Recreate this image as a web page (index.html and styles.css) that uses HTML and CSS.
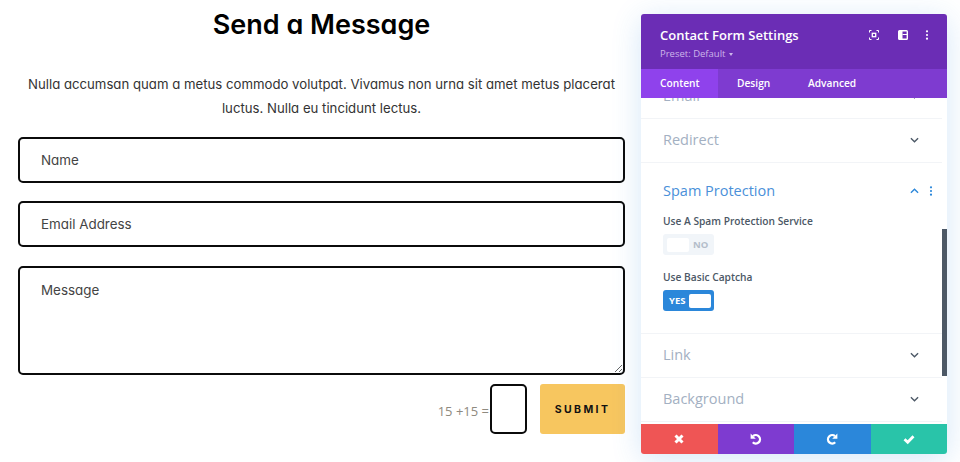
FILE: index.html
```html
<!DOCTYPE html>
<html lang="en">
<head>
<meta charset="utf-8">
<title>Contact Form Settings</title>
<link rel="stylesheet" href="styles.css">
</head>
<body>
<main class="page">
  <h1 class="title">Send a Message</h1>
  <p class="intro">Nulla accumsan quam a metus commodo volutpat. Vivamus non urna sit amet metus placerat luctus. Nulla eu tincidunt lectus.</p>
  <form class="form">
    <input class="field" type="text" placeholder="Name">
    <input class="field" type="text" placeholder="Email Address">
    <textarea class="field area" placeholder="Message"></textarea>
    <div class="submit-row">
      <span class="captcha-label">15 +15 =</span>
      <input class="captcha" type="text">
      <button class="submit" type="button">SUBMIT</button>
    </div>
  </form>
</main>

<aside class="panel">
  <header class="panel-head">
    <div class="head-text">
      <div class="panel-title">Contact Form Settings</div>
      <div class="preset">Preset: Default <span class="caret"></span></div>
    </div>
    <div class="head-icons">
      <svg class="hicon focus" viewBox="0 0 10 10"><path d="M.5 2.500V.5h2M7.500.5h2v2M9.500 7.500v2h-2M2.500 9.500h-2v-2" fill="none" stroke="#fff" stroke-width="1"/><rect x="3.300" y="3.300" width="3.400" height="3.400" fill="none" stroke="#fff" stroke-width="1.300"/></svg>
      <svg class="hicon split" viewBox="0 0 10 10"><rect x=".7" y=".7" width="8.600" height="8.600" rx=".8" fill="none" stroke="#fff" stroke-width="1.400"/><path d="M1 1h3.500v8H1z" fill="#fff"/><path d="M4.500 4.500h4.500" stroke="#fff" stroke-width="1"/></svg>
      <svg class="hicon more" viewBox="0 0 4 10"><circle cx="2" cy="1.300" r="1.100" fill="#fff"/><circle cx="2" cy="5" r="1.100" fill="#fff"/><circle cx="2" cy="8.700" r="1.100" fill="#fff"/></svg>
    </div>
  </header>
  <nav class="tabs">
    <span class="tab active">Content</span>
    <span class="tab">Design</span>
    <span class="tab">Advanced</span>
  </nav>
  <div class="panel-body">
    <div class="scroll-content">
      <div class="row"><span>Email</span><svg class="chev" viewBox="0 0 10 6"><path d="M1 1l4 4 4-4" fill="none" stroke="#4c5866" stroke-width="1.500"/></svg></div>
      <div class="row"><span>Redirect</span><svg class="chev" viewBox="0 0 10 6"><path d="M1 1l4 4 4-4" fill="none" stroke="#4c5866" stroke-width="1.500"/></svg></div>
      <section class="open-section">
        <div class="open-head">
          <span>Spam Protection</span>
          <svg class="chev up" viewBox="0 0 10 6"><path d="M1 5l4-4 4 4" fill="none" stroke="#2b87da" stroke-width="1.500"/></svg>
          <svg class="dots" viewBox="0 0 4 10"><circle cx="2" cy="1.300" r="1.100" fill="#2b87da"/><circle cx="2" cy="5" r="1.100" fill="#2b87da"/><circle cx="2" cy="8.700" r="1.100" fill="#2b87da"/></svg>
        </div>
        <div class="opt-label first">Use A Spam Protection Service</div>
        <div class="toggle off"><span class="knob"></span><span class="tog-text">NO</span></div>
        <div class="opt-label second">Use Basic Captcha</div>
        <div class="toggle on"><span class="tog-text">YES</span><span class="knob"></span></div>
      </section>
      <div class="row"><span>Link</span><svg class="chev" viewBox="0 0 10 6"><path d="M1 1l4 4 4-4" fill="none" stroke="#4c5866" stroke-width="1.500"/></svg></div>
      <div class="row last"><span>Background</span><svg class="chev" viewBox="0 0 10 6"><path d="M1 1l4 4 4-4" fill="none" stroke="#4c5866" stroke-width="1.500"/></svg></div>
    </div>
    <div class="scrollbar"></div>
  </div>
  <footer class="actions">
    <span class="act red"><svg class="aicon" viewBox="0 0 12 12"><path d="M2.500 2.500l7 7M9.500 2.500l-7 7" stroke="#fff" stroke-width="3" fill="none"/></svg></span>
    <span class="act purple"><svg class="aicon" viewBox="0 0 12 12"><path d="M3 3.200A4.200 4.200 0 1 1 2.800 9.300" stroke="#fff" stroke-width="2.300" fill="none"/><path d="M.6.6v5.200h5.200z" fill="#fff"/></svg></span>
    <span class="act blue"><svg class="aicon" viewBox="0 0 12 12"><path d="M9 3.200A4.200 4.200 0 1 0 9.200 9.300" stroke="#fff" stroke-width="2.300" fill="none"/><path d="M11.400.6v5.200H6.200z" fill="#fff"/></svg></span>
    <span class="act green"><svg class="aicon" viewBox="0 0 12 12"><path d="M1.500 6.200l3.200 3 5.800-6" stroke="#fff" stroke-width="2.800" fill="none"/></svg></span>
  </footer>
</aside>
</body>
</html>
```

FILE: styles.css
```css
* { box-sizing: border-box; }
html, body { margin: 0; height: 462px; overflow: hidden; background: #fff; }
body { font-family: "Open Sans", sans-serif; position: relative; }

.page { width: 607px; margin-left: 18px; font-family: "Inter", sans-serif; font-feature-settings: "cv11" 1; }
.title { margin: 0; padding-top: 7px; font-size: 27px; line-height: 36px; font-weight: 600; color: #000; text-align: center; }
.intro { margin: 29px 0 0; font-size: 13.200px; line-height: 24px; font-weight: 400; color: #333; text-align: center; }

.form { display: flex; flex-direction: column; gap: 18px; margin-top: 17px; }
.field { display: block; width: 100%; height: 46px; padding: 0 21px; border: 2px solid #0b0b0b; border-radius: 5px; background: #fff; font: 13.400px "Inter", sans-serif; font-feature-settings: "cv11" 1; color: #444; outline: none; }
.field::placeholder { color: #444; opacity: 1; }
.area { height: 109px; margin-top: 1px; padding-top: 14px; }
.submit-row { display: flex; align-items: center; justify-content: flex-end; margin-top: -9px; height: 50px; }
.captcha-label { font: 13px "Open Sans", sans-serif; color: #8f8a80; padding-top: 3px; }
.captcha { width: 37px; height: 50px; border: 2px solid #0b0b0b; border-radius: 5px; background: #fff; margin-left: 1px; }
.submit { width: 85px; height: 50px; margin-left: 13px; border: 0; border-radius: 3px; background: #f7c65f; color: #111; font: 700 10.500px "Inter", sans-serif; letter-spacing: 2.400px; }

.panel { position: absolute; left: 641px; top: 14px; width: 306px; height: 440px; display: flex; flex-direction: column; background: #fff; border-radius: 3px; overflow: hidden; box-shadow: 0 5px 30px rgba(43, 135, 218, .2); }
.panel-head { height: 55px; flex: none; display: flex; justify-content: space-between; background: #6b2db5; color: #fff; padding: 12px 18px 0 19px; }
.panel-title { font-size: 13px; line-height: 18px; font-weight: 600; color: #fff; }
.preset { font-size: 9.500px; line-height: 14px; margin-top: 3px; color: #cdb5ea; }
.caret { display: inline-block; width: 0; height: 0; border: 2.500px solid transparent; border-top: 3px solid #cdb5ea; border-bottom: 0; vertical-align: middle; margin-left: 1px; }
.head-icons { display: flex; align-items: flex-start; padding-top: 4px; }
.hicon { height: 10px; display: block; width: 10px; }
.split { margin-left: 19px; }
.more { width: 4px; margin-left: 17px; }

.tabs { height: 29px; flex: none; display: flex; background: #7e3bd0; }
.tab { font-size: 10.200px; font-weight: 600; line-height: 29px; color: #fff; padding: 0 19px; }
.tab.active { width: 77px; background: #8f42ec; }
.tab:nth-child(2) { padding: 0 0 0 19px; width: 71px; }
.tab:nth-child(3) { padding: 0 0 0 19px; }

.panel-body { flex: 1; position: relative; overflow: hidden; }
.scroll-content { margin-top: -23px; }
.row { height: 44px; display: flex; align-items: center; justify-content: space-between; padding: 0 23px 2px 22px; margin-right: 5px; border-bottom: 1px solid #f2f4f7; font-size: 14.500px; color: #a3b0c2; }
.chev { width: 9px; height: 6px; flex: none; display: block; }
.open-section { height: 171px; padding: 18px 0 0 22px; margin-right: 5px; border-bottom: 1px solid #f2f4f7; }
.open-head { display: flex; align-items: center; height: 19px; padding-right: 9px; font-size: 14.500px; color: #4a90d9; }
.open-head span { flex: 1; }
.open-head .up { margin-right: 10px; }
.dots { width: 4px; height: 10px; display: block; }
.opt-label { font-size: 10.200px; font-weight: 600; line-height: 14px; color: #4c5866; }
.opt-label.first { margin-top: 14px; }
.opt-label.second { margin-top: 15px; }
.toggle { width: 51px; height: 21px; margin-top: 6px; border-radius: 3px; display: flex; align-items: center; gap: 4px; padding: 0 4px; font-size: 9.500px; font-weight: 700; }
.toggle.off { background: #f1f5f9; color: #b4bdca; }
.toggle.on { background: #2b87da; color: #fff; justify-content: space-between; padding-left: 6px; }
.knob { width: 22px; height: 14px; border-radius: 2px; background: #fff; flex: none; }
.tog-text { line-height: 14px; }
.scrollbar { position: absolute; right: 0; top: 131px; width: 5px; height: 147px; background: #4c5866; }

.actions { height: 30px; flex: none; display: grid; grid-template-columns: repeat(4, 1fr); }
.act { display: flex; align-items: center; justify-content: center; }
.aicon { width: 12px; height: 12px; display: block; }
.red { background: #ef5555; }
.purple { background: #7e3bd0; }
.blue { background: #2b87da; }
.green { background: #29c4a9; }
```
